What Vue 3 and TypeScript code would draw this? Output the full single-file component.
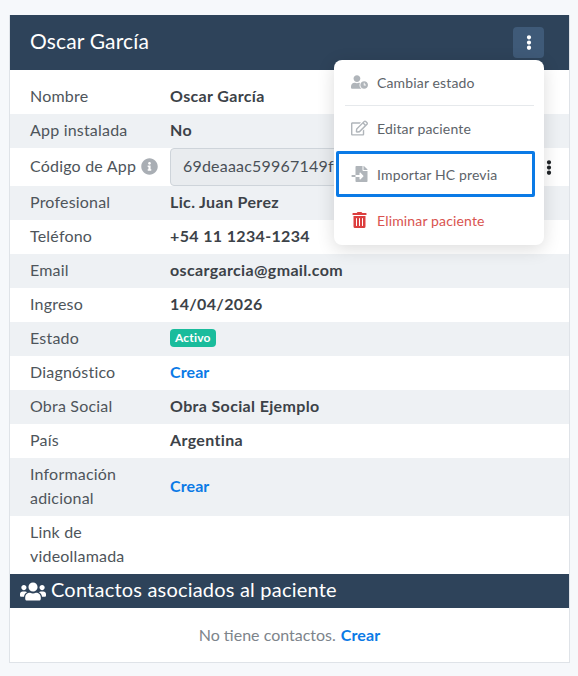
<script setup lang="ts">
interface Row { label: string; value?: string; kind?: 'text' | 'link' | 'badge' | 'empty' }
const before: Row[] = [
  { label: 'Nombre', value: 'Oscar García' },
  { label: 'App instalada', value: 'No' },
]
const after: Row[] = [
  { label: 'Profesional', value: 'Lic. Juan Perez' },
  { label: 'Teléfono', value: '+54 11 1234-1234' },
  { label: 'Email', value: 'oscargarcia@gmail.com' },
  { label: 'Ingreso', value: '14/04/2026' },
  { label: 'Estado', value: 'Activo', kind: 'badge' },
  { label: 'Diagnóstico', value: 'Crear', kind: 'link' },
  { label: 'Obra Social', value: 'Obra Social Ejemplo' },
  { label: 'País', value: 'Argentina' },
  { label: 'Información adicional', value: 'Crear', kind: 'link' },
  { label: 'Link de videollamada', kind: 'empty' },
]
</script>

<template>
  <div class="page">
    <section class="card">
      <header class="head">
        <h1>Oscar García</h1>
        <button class="more" type="button" aria-label="Opciones">
          <svg viewBox="0 0 192 512" class="dots"><path d="M96 184c39.800 0 72 32.200 72 72s-32.200 72-72 72-72-32.200-72-72 32.200-72 72-72zM24 80c0 39.800 32.200 72 72 72s72-32.200 72-72S135.800 8 96 8 24 40.200 24 80zm0 352c0 39.800 32.200 72 72 72s72-32.200 72-72-32.200-72-72-72-72 32.200-72 72z"/></svg>
        </button>
      </header>

      <div class="rows">
        <div v-for="r in before" :key="r.label" class="row">
          <div class="lab">{{ r.label }}</div>
          <div class="val">{{ r.value }}</div>
        </div>
        <div class="row code">
          <div class="lab">
            Código de App
            <svg viewBox="0 0 512 512" class="info"><path d="M256 8C119 8 8 119 8 256s111 248 248 248 248-111 248-248S393 8 256 8zm0 110c23.200 0 42 18.800 42 42s-18.800 42-42 42-42-18.800-42-42 18.800-42 42-42zm56 254c0 6.600-5.400 12-12 12h-88c-6.600 0-12-5.400-12-12v-24c0-6.600 5.400-12 12-12h12v-64h-12c-6.600 0-12-5.400-12-12v-24c0-6.600 5.400-12 12-12h64c6.600 0 12 5.400 12 12v100h12c6.600 0 12 5.400 12 12v24z"/></svg>
          </div>
          <div class="codeval">
            <div class="input">69deaaac59967149f0a2c1d8</div>
            <svg viewBox="0 0 192 512" class="dots dark"><path d="M96 184c39.800 0 72 32.200 72 72s-32.200 72-72 72-72-32.200-72-72 32.200-72 72-72zM24 80c0 39.800 32.200 72 72 72s72-32.200 72-72S135.800 8 96 8 24 40.200 24 80zm0 352c0 39.800 32.200 72 72 72s72-32.200 72-72-32.200-72-72-72-72 32.200-72 72z"/></svg>
          </div>
        </div>
        <div v-for="r in after" :key="r.label" class="row">
          <div class="lab">{{ r.label }}</div>
          <div v-if="r.kind === 'badge'" class="val"><span class="badge">{{ r.value }}</span></div>
          <div v-else-if="r.kind === 'link'" class="val link">{{ r.value }}</div>
          <div v-else class="val">{{ r.value }}</div>
        </div>
      </div>

      <div class="subhead">
        <svg viewBox="0 0 640 512" class="users"><path d="M96 224c35.300 0 64-28.700 64-64s-28.700-64-64-64-64 28.700-64 64 28.700 64 64 64zm448 0c35.300 0 64-28.700 64-64s-28.700-64-64-64-64 28.700-64 64 28.700 64 64 64zm32 32h-64c-17.600 0-33.500 7.100-45.100 18.600 40.300 22.100 68.900 62 75.100 109.400h66c17.700 0 32-14.300 32-32v-32c0-35.300-28.700-64-64-64zm-256 0c61.900 0 112-50.100 112-112S381.900 32 320 32 208 82.100 208 144s50.100 112 112 112zm76.800 32h-8.300c-20.800 10-43.900 16-68.500 16s-47.600-6-68.500-16h-8.300C179.600 288 128 339.600 128 403.200V432c0 26.500 21.500 48 48 48h288c26.500 0 48-21.500 48-48v-28.800c0-63.600-51.600-115.200-115.200-115.200zm-223.700-13.400C161.500 263.100 145.600 256 128 256H64c-35.300 0-64 28.700-64 64v32c0 17.700 14.300 32 32 32h65.900c6.300-47.400 34.900-87.300 75.200-109.400z"/></svg>
        <span>Contactos asociados al paciente</span>
      </div>
      <div class="empty">No tiene contactos. <a class="link">Crear</a></div>

      <div class="menu">
        <div class="item">
          <svg viewBox="0 0 640 512" class="ic"><path d="M496 224c-79.600 0-144 64.400-144 144s64.400 144 144 144 144-64.400 144-144-64.400-144-144-144zm64 150.300c0 5.300-4.400 9.700-9.700 9.700h-60.600c-5.300 0-9.700-4.400-9.700-9.700v-76.600c0-5.300 4.400-9.700 9.700-9.700h12.600c5.300 0 9.700 4.400 9.700 9.700V352h38.300c5.300 0 9.700 4.400 9.700 9.700v12.600zM320 368c0-27.800 6.700-54.100 18.200-77.500-8-1.500-16.200-2.500-24.600-2.500h-16.700c-22.200 10.200-46.900 16-72.900 16s-50.600-5.800-72.900-16h-16.700C60.200 288 0 348.200 0 422.400V464c0 26.500 21.500 48 48 48h347.100c-45.300-31.900-75.100-84.500-75.100-144zm-96-112c70.700 0 128-57.300 128-128S294.700 0 224 0 96 57.300 96 128s57.300 128 128 128z"/></svg>
          <span>Cambiar estado</span>
        </div>
        <div class="item">
          <svg viewBox="0 0 576 512" class="ic"><path d="M402.300 344.900l32-32c5-5 13.700-1.500 13.700 5.700V464c0 26.500-21.500 48-48 48H48c-26.500 0-48-21.500-48-48V112c0-26.500 21.500-48 48-48h273.500c7.100 0 10.700 8.600 5.700 13.700l-32 32c-1.500 1.500-3.500 2.300-5.700 2.300H48v352h352V350.500c0-2.100.8-4.100 2.300-5.600zm156.600-201.800L296.300 405.700l-90.400 10c-26.200 2.900-48.500-19.200-45.600-45.600l10-90.400L432.900 17.100c22.900-22.900 59.900-22.900 82.700 0l43.200 43.200c22.900 22.900 22.900 60 .1 82.800zM460.100 174L402 115.900 216.200 301.800l-7.300 65.300 65.300-7.300L460.100 174zm64.800-79.700l-43.200-43.200c-4.100-4.100-10.800-4.100-14.800 0L436 82l58.100 58.100 30.900-30.900c4-4.200 4-10.800-.1-14.900z"/></svg>
          <span>Editar paciente</span>
        </div>
        <div class="item focus">
          <svg viewBox="0 0 512 512" class="ic"><path d="M16 288c-8.800 0-16 7.200-16 16v32c0 8.800 7.200 16 16 16h112v-64zm489-183L407.100 7c-4.500-4.500-10.600-7-17-7H384v128h128v-6.100c0-6.300-2.500-12.400-7-16.900zm-153 31V0H152c-13.300 0-24 10.700-24 24v264h128v-65.200c0-14.300 17.300-21.400 27.400-11.300L379 308c6.600 6.700 6.600 17.400 0 24l-95.700 96.400c-10.100 10.100-27.400 3-27.400-11.300V352H128v136c0 13.300 10.700 24 24 24h336c13.300 0 24-10.700 24-24V160H376c-13.200 0-24-10.800-24-24z"/></svg>
          <span>Importar HC previa</span>
        </div>
        <div class="item danger">
          <svg viewBox="0 0 448 512" class="ic"><path d="M32 464a48 48 0 0 0 48 48h288a48 48 0 0 0 48-48V128H32zm272-256a16 16 0 0 1 32 0v224a16 16 0 0 1-32 0zm-96 0a16 16 0 0 1 32 0v224a16 16 0 0 1-32 0zm-96 0a16 16 0 0 1 32 0v224a16 16 0 0 1-32 0zM432 32H312l-9.400-18.700A24 24 0 0 0 281.100 0H166.800a23.720 23.720 0 0 0-21.400 13.300L136 32H16A16 16 0 0 0 0 48v32a16 16 0 0 0 16 16h416a16 16 0 0 0 16-16V48a16 16 0 0 0-16-16z"/></svg>
          <span>Eliminar paciente</span>
        </div>
      </div>
    </section>
  </div>
</template>

<style>
html, body { margin: 0; background: #f6f8fb; }
</style>

<style scoped>
.page {
  box-sizing: border-box;
  height: 676px;
  padding: 15px 8px 0 9px;
  font-family: Lato, "Open Sans", sans-serif;
  font-size: 16px;
  letter-spacing: 0.2px;
  color: #495057;
  overflow: hidden;
}
.card {
  position: relative;
  height: 648px;
  box-sizing: border-box;
  background: #fff;
  border: 1px solid #dfe3e8;
  border-top: 0;
}
.head {
  height: 55px;
  background: #2e435a;
  display: flex;
  align-items: center;
  justify-content: space-between;
  padding: 0 25px 0 20px;
  margin-bottom: 10px;
}
.head h1 {
  margin: 0 0 5px;
  font-size: 21px;
  font-weight: 400;
  letter-spacing: 0.15px;
  color: #fff;
}
.more {
  width: 31px;
  height: 31px;
  margin-top: -1px;
  padding: 0;
  border: 0;
  border-radius: 4px;
  background: #3f5a78;
  display: flex;
  align-items: center;
  justify-content: center;
}
.dots { width: 6px; height: 15px; fill: #fff; }
.dots.dark { fill: #212529; flex: none; }
.rows { display: flex; flex-direction: column; }
.row {
  display: flex;
  min-height: 34px;
  box-sizing: border-box;
  align-items: center;
}
.row:nth-child(even) { background: #eef1f4; }
.lab {
  width: 160px;
  box-sizing: border-box;
  flex: none;
  line-height: 24px;
  padding: 4px 36px 6px 20px;
  color: #4e555b;
}
.val { font-weight: 700; color: #3c4248; padding-bottom: 4px; letter-spacing: 0.35px; }
.val.link, .link { color: #0b7ae6; font-weight: 700; letter-spacing: 0.1px; }
.code { min-height: 38px; }
.code .lab {
  padding-right: 0;
  white-space: nowrap;
  display: flex;
  align-items: center;
  gap: 5px;
}
.info { width: 17px; height: 17px; fill: #a9aeb4; }
.codeval {
  flex: 1;
  min-width: 0;
  display: flex;
  align-items: center;
  gap: 13px;
  padding-right: 17px;
}
.input {
  flex: 1;
  min-width: 0;
  height: 38px;
  box-sizing: border-box;
  padding: 0 12px;
  line-height: 34px;
  border: 1px solid #ced4da;
  border-radius: 4px;
  background: #e9ecef;
  color: #495057;
  overflow: hidden;
  white-space: nowrap;
}
.badge {
  display: block;
  width: max-content;
  margin-top: 2px;
  background: #1abc9c;
  color: #fff;
  font-size: 12px;
  font-weight: 700;
  letter-spacing: 0.2px;
  line-height: 18px;
  padding: 0 5px;
  border-radius: 4px;
}
.subhead {
  height: 34px;
  background: #2e435a;
  color: #fff;
  font-size: 20px;
  display: flex;
  align-items: center;
  gap: 5px;
  padding-left: 10px;
}
.subhead span { padding-bottom: 4px; }
.users { width: 26px; height: 21px; fill: #fff; }
.empty {
  height: 54px;
  display: flex;
  align-items: center;
  justify-content: center;
  gap: 5px;
  padding-bottom: 2px;
  box-sizing: border-box;
  letter-spacing: 0;
  color: #7d848b;
}
.menu {
  position: absolute;
  top: 45px;
  left: 324px;
  width: 210px;
  height: 185px;
  background: #fff;
  border-radius: 8px;
  box-shadow: 0 4px 18px rgba(0, 0, 0, 0.14);
  font-size: 14px;
  letter-spacing: 0.15px;
}
.item {
  height: 46px;
  box-sizing: border-box;
  display: flex;
  align-items: center;
  gap: 9px;
  padding: 0 0 2px 17px;
  color: #5d6369;
}
.item:first-child { position: relative; }
.item:first-child::after {
  content: "";
  position: absolute;
  left: 11px;
  right: 10px;
  bottom: 0;
  height: 1px;
  background: #e6e9ec;
}
.ic { width: 17px; height: 16px; fill: #b0b5ba; flex: none; }
.focus {
  position: relative;
  margin: -1px 9px 1px 2px;
  padding: 0 0 0 15px;
  outline: 3px solid #0b7ae6;
  outline-offset: -3px;
  border-radius: 2px;
}
.danger { color: #d9534f; }
.danger .ic { fill: #dc3f3f; }
</style>
